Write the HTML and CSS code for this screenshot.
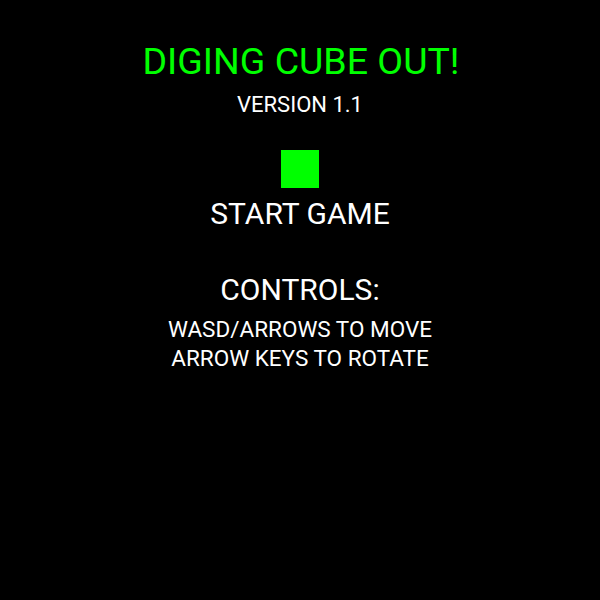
FILE: index.html
```html
<!DOCTYPE html>
<html>
<head>
<meta charset="utf-8">
<link rel="stylesheet" href="styles.css">
</head>
<body>
<main class="menu">
  <h1 class="title">DIGING CUBE OUT!</h1>
  <p class="version">VERSION 1.1</p>
  <div class="cube"></div>
  <p class="start">START GAME</p>
  <p class="controls-head">CONTROLS:</p>
  <p class="controls-line">WASD/ARROWS TO MOVE</p>
  <p class="controls-line">ARROW KEYS TO ROTATE</p>
</main>
</body>
</html>
```

FILE: styles.css
```css
html, body {
  margin: 0;
  padding: 0;
  background: #000;
  width: 600px;
  height: 600px;
  overflow: hidden;
}
.menu {
  display: flex;
  flex-direction: column;
  align-items: center;
  font-family: Roboto, "Liberation Sans", sans-serif;
  color: #fff;
  padding-top: 39px;
}
.title, .version, .start, .controls-head, .controls-line {
  margin: 0;
  font-weight: 400;
  white-space: nowrap;
}
.title {
  color: #00ff00;
  font-size: 37.5px;
  line-height: 44px;
  padding-left: 2px;
}
.version {
  font-size: 22px;
  line-height: 26px;
  margin-top: 9px;
}
.cube {
  width: 38px;
  height: 38px;
  background: #00ff00;
  margin-top: 32px;
}
.start {
  font-size: 30px;
  line-height: 36px;
  margin-top: 8px;
}
.controls-head {
  font-size: 30px;
  line-height: 36px;
  margin-top: 40px;
}
.controls-line {
  font-size: 22.5px;
  line-height: 29px;
}
.controls-head + .controls-line {
  margin-top: 7px;
}
```
